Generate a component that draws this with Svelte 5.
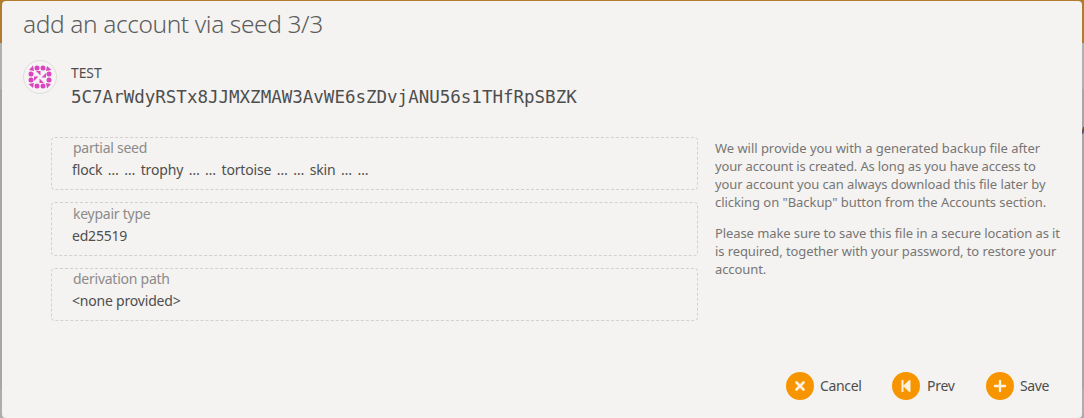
<script>
  const fields = [
    { label: 'partial seed', value: 'flock … … trophy … … tortoise … … skin … …', cls: 'seed' },
    { label: 'keypair type', value: 'ed25519', cls: 'type' },
    { label: 'derivation path', value: '<none provided>', cls: 'path' }
  ];
  const hints = [
    [
      'We will provide you with a generated backup file after',
      'your account is created. As long as you have access to',
      'your account you can always download this file later by',
      'clicking on "Backup" button from the Accounts section.'
    ],
    [
      'Please make sure to save this file in a secure location as it',
      'is required, together with your password, to restore your',
      'account.'
    ]
  ];
  const dots = [[9, 3], [15, 3], [3, 9], [21, 9], [3, 15], [21, 15], [9, 21], [15, 21]];
</script>

<div class="page">
  <div class="modal">
    <h1><span>add an account via seed 3/3</span></h1>
    <div class="account">
      <div class="avatar">
        <svg width="24" height="24" viewBox="0 0 24 24" fill="#dc45c0">
          {#each dots as [x, y]}<circle cx={x} cy={y} r="2.5" />{/each}
          {#each [0, 90, 180, 270] as angle}
            <g transform="rotate({angle} 12 12)">
              <path d="M5 .5L6 6 1 5z" />
              <path d="M8 6h4.500v4.500z" />
            </g>
          {/each}
        </svg>
      </div>
      <div class="identity">
        <div class="name"><span>TEST</span></div>
        <div class="address"><span>5C7ArWdyRSTx8JJMXZMAW3AvWE6sZDvjANU56s1THfRpSBZK</span></div>
      </div>
    </div>
    <div class="content">
      <div class="fields">
        {#each fields as field}
          <div class="field {field.cls}">
            <div class="label"><span>{field.label}</span></div>
            <div class="value"><span>{field.value}</span></div>
          </div>
        {/each}
      </div>
      <div class="hints">
        {#each hints as lines}
          <p>{#each lines as line}<span>{line}</span>{/each}</p>
        {/each}
      </div>
    </div>
    <div class="actions">
      <button class="cancel">
        <i><svg width="28" height="28" viewBox="0 0 28 28" stroke="#fff1db" stroke-width="2.7" stroke-linecap="round" fill="none"><path d="M10.500 10.500l7 7M17.500 10.500l-7 7" /></svg></i>
        <span>Cancel</span>
      </button>
      <button class="prev">
        <i><svg width="28" height="28" viewBox="0 0 28 28" fill="#fff1db"><path d="M9.500 8h2v5.500L17 8.200q1.500-.8 1.500.8v10q0 1.600-1.500.8l-5.500-5.300V20h-2z" /></svg></i>
        <span>Prev</span>
      </button>
      <button class="save">
        <i><svg width="28" height="28" viewBox="0 0 28 28" stroke="#fff1db" stroke-width="2.4" stroke-linecap="round" fill="none"><path d="M14 9v10M9 14h10" /></svg></i>
        <span>Save</span>
      </button>
    </div>
  </div>
  <div class="peek"></div>
</div>

<style>
  .page {
    position: relative;
    box-sizing: border-box;
    width: 1084px;
    height: 418px;
    padding: 1px 2px 0;
    background: linear-gradient(#b27c2e 43px, #b0b0af 43px 89px, #a7a6a5 89px 389px, #aeadac 389px);
    font-family: 'Noto Sans', 'Open Sans', sans-serif;
    font-size: 14px;
    color: #4e4e4e;
    overflow: hidden;
  }
  .peek {
    position: absolute;
    right: 0;
    top: 127px;
    width: 2px;
    height: 7px;
    background: linear-gradient(#6b5238 50%, #55527e 50%);
    clip-path: polygon(50% 0, 100% 0, 100% 60%, 50% 100%, 0 100%, 0 50%);
  }
  .modal {
    box-sizing: border-box;
    display: flex;
    flex-direction: column;
    height: 417px;
    padding: 0 21px 0;
    background: #f4f3f1;
    border-radius: 4px;
    white-space: nowrap;
  }
  h1 {
    margin: 0;
    height: 58px;
    font-size: 24.5px;
    line-height: 46px;
    font-weight: 300;
    letter-spacing: -0.4px;
    color: #5c5c5c;
  }
  .account { display: flex; gap: 14px; height: 78px; }
  .avatar {
    box-sizing: border-box;
    display: flex;
    align-items: center;
    justify-content: center;
    width: 34px;
    height: 34px;
    margin-top: 1px;
    border: 1px solid #ddd;
    border-radius: 50%;
    background: #f5f4f3;
  }
  .name { height: 26px; line-height: 28px; font-size: 13.8px; }
  .address {
    font-family: 'DejaVu Sans Mono', monospace;
    font-size: 17.5px;
    line-height: 24px;
  }
  .content { display: flex; gap: 17px; height: 223px; padding-left: 28px; }
  .fields { display: flex; flex: none; flex-direction: column; gap: 12px; width: 647px; }
  .field {
    box-sizing: border-box;
    height: 53px;
    padding: 0 20px;
    border: 1px dashed #d2d1d0;
    border-radius: 4px;
  }
  .field.type { height: 54px; padding-top: 1px; }
  .label { padding-left: 1px; height: 22px; line-height: 20px; color: #8c8b8a; letter-spacing: -0.25px; }
  .value { line-height: 20px; letter-spacing: -0.2px; }
  .seed .value { letter-spacing: -0.15px; word-spacing: 2px; }
  .hints { padding-top: 2px; color: #777675; font-size: 13px; line-height: 18px; }
  p { margin: 0 0 13px; }
  p span { display: block; width: max-content; letter-spacing: -0.09px; }
  p:first-child span:nth-child(1) { letter-spacing: -0.04px; }
  p:first-child span:nth-child(2) { letter-spacing: -0.14px; }
  p:first-child span:nth-child(4) { letter-spacing: -0.06px; }
  .actions { display: flex; justify-content: flex-end; padding: 12px 12px 0 0; }
  button {
    display: flex;
    align-items: center;
    gap: 6px;
    padding: 0;
    border: 0;
    background: none;
    font: inherit;
    color: inherit;
    letter-spacing: -0.35px;
  }
  button span { padding-bottom: 2px; }
  .cancel { width: 106px; }
  .prev { width: 94px; gap: 7px; letter-spacing: -0.25px; }
  .save { width: 63px; letter-spacing: -0.4px; }
  i { display: block; width: 28px; height: 28px; border-radius: 50%; background: #f79500; }
  svg { display: block; }
</style>
